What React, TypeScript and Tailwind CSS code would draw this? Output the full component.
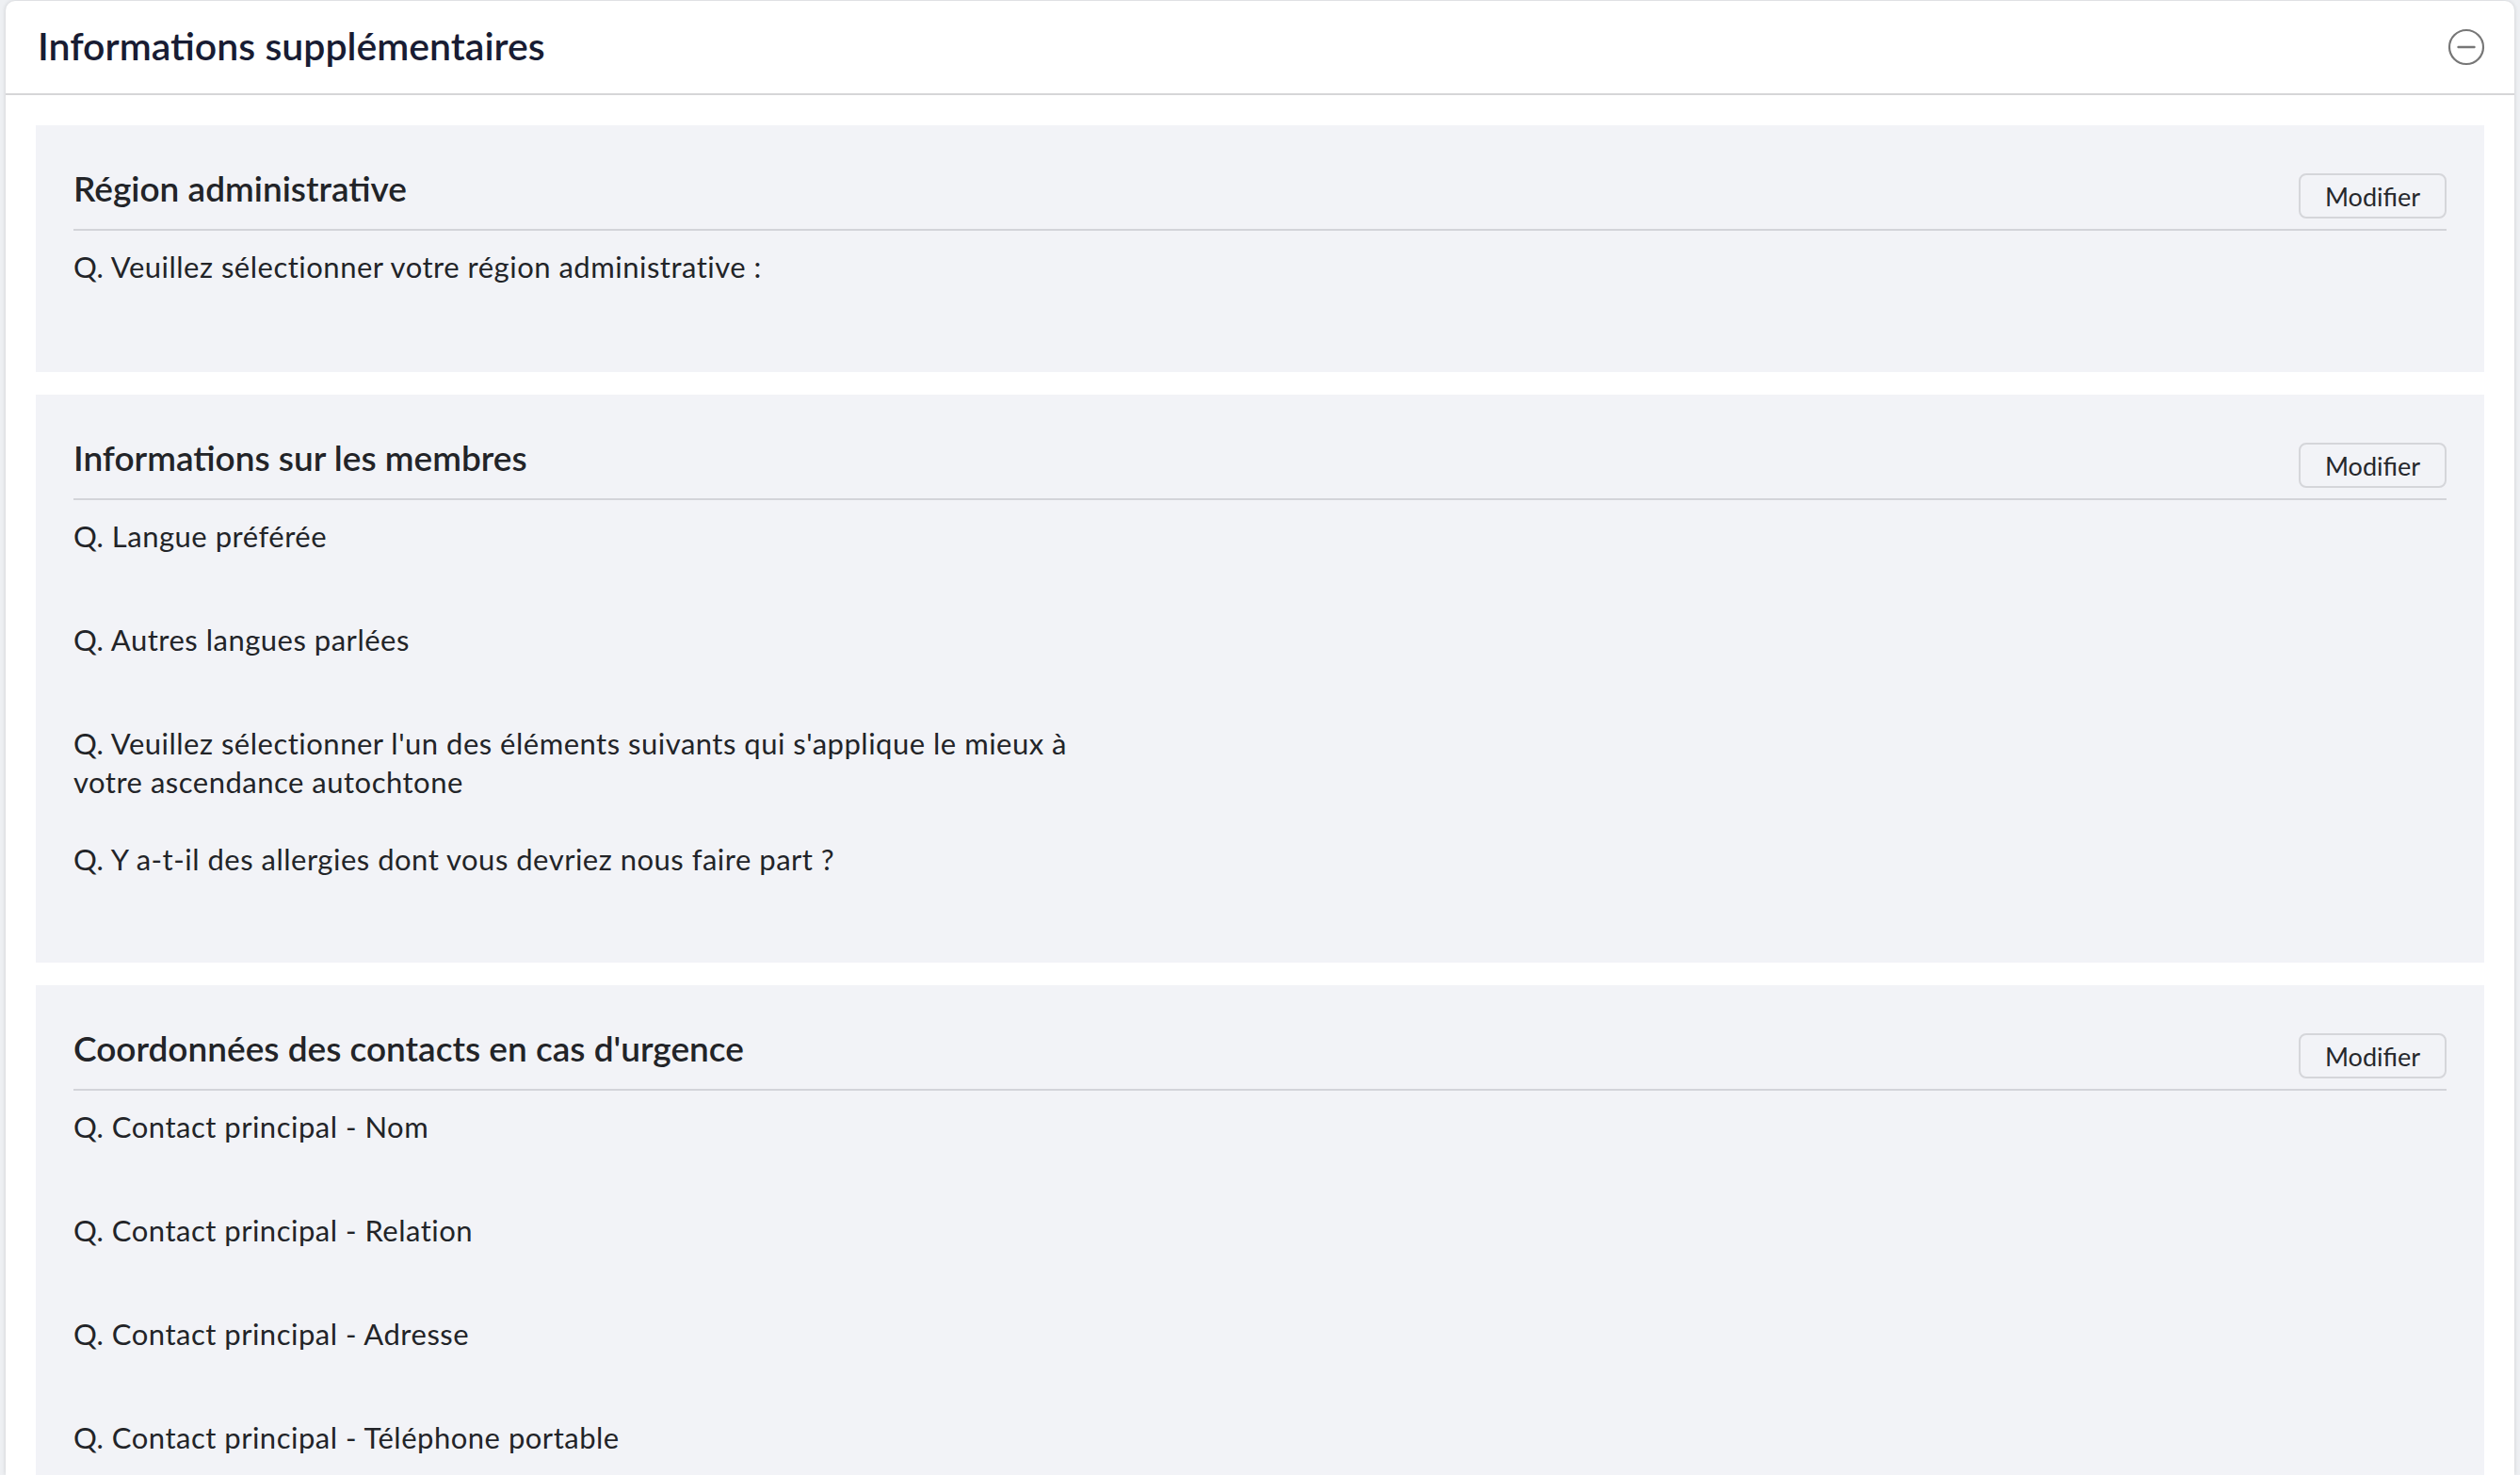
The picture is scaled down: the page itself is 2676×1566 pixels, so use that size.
import React from "react";

type Section = {
  title: string;
  questions: string[];
  bottomPad: string;
};

const sections: Section[] = [
  {
    title: "Région administrative",
    questions: ["Q. Veuillez sélectionner votre région administrative :"],
    bottomPad: "pb-[22px]",
  },
  {
    title: "Informations sur les membres",
    questions: [
      "Q. Langue préférée",
      "Q. Autres langues parlées",
      "Q. Veuillez sélectionner l'un des éléments suivants qui s'applique le mieux à votre ascendance autochtone",
      "Q. Y a-t-il des allergies dont vous devriez nous faire part ?",
    ],
    bottomPad: "pb-[20px]",
  },
  {
    title: "Coordonnées des contacts en cas d'urgence",
    questions: [
      "Q. Contact principal - Nom",
      "Q. Contact principal - Relation",
      "Q. Contact principal - Adresse",
      "Q. Contact principal - Téléphone portable",
    ],
    bottomPad: "pb-[20px]",
  },
];

function CollapseIcon() {
  return (
    <svg width="40" height="40" viewBox="0 0 40 40" fill="none" aria-hidden="true">
      <circle cx="20" cy="20" r="18" stroke="#777" strokeWidth="2.2" />
      <line x1="11.5" y1="20" x2="28.5" y2="20" stroke="#777" strokeWidth="2.4" strokeLinecap="round" />
    </svg>
  );
}

function SectionPanel({ section }: { section: Section }) {
  return (
    <section className={`bg-[#f2f3f7] px-[40px] pt-[45px] ${section.bottomPad}`}>
      <div className="flex items-start justify-between border-b-2 border-[#d3d4d9] pb-[11px]">
        <h3 className="text-[37px] leading-[44px] font-semibold text-[#222428]">
          {section.title}
        </h3>
        <button
          type="button"
          className="mt-[6px] h-[48px] w-[157px] rounded-[8px] border-2 border-[#d5d6da] bg-transparent text-[27px] leading-none text-[#26282c]"
        >
          Modifier
        </button>
      </div>
      <div className="pt-[18px]">
        {section.questions.map((q) => (
          <div key={q} className="grid grid-cols-[1110px_1fr] min-h-[69px] mb-[41px]">
            <p className="text-[31px] leading-[41px] tracking-[0.5px] text-[#222428]">{q}</p>
            <div />
          </div>
        ))}
      </div>
    </section>
  );
}

export default function App() {
  return (
    <div
      className="min-h-screen bg-[#eef0f3] pl-[6px] pr-[6px] pt-[1px] overflow-hidden"
      style={{ fontFamily: "Lato, 'Noto Sans', sans-serif" }}
    >
      <div className="h-[1565px] overflow-hidden rounded-t-[10px] bg-white shadow-[0_0_5px_rgba(0,0,0,0.14)]">
        <header className="flex items-start justify-between border-b-2 border-[#d6d6d8] pl-[34px] pr-[31px] pt-[23px] h-[100px]">
          <h2 className="text-[41px] leading-[50px] font-semibold text-[#181c33]">
            Informations supplémentaires
          </h2>
          <button type="button" className="mt-[6px]" aria-label="Réduire">
            <CollapseIcon />
          </button>
        </header>
        <div className="flex flex-col gap-[24px] px-[32px] pt-[32px]">
          {sections.map((s) => (
            <SectionPanel key={s.title} section={s} />
          ))}
        </div>
      </div>
    </div>
  );
}
